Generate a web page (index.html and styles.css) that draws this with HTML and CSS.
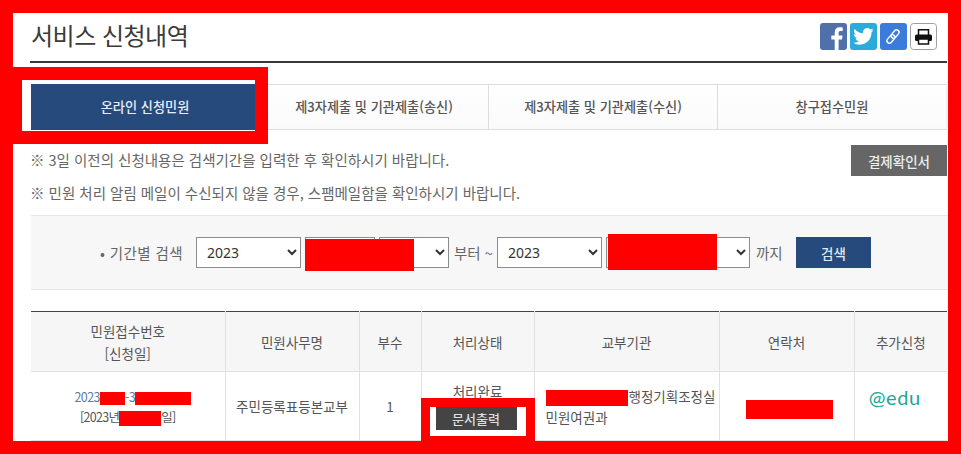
FILE: index.html
```html
<!DOCTYPE html>
<html lang="ko">
<head>
    <meta charset="UTF-8">
    <title>서비스 신청내역</title>
    <link rel="stylesheet" href="styles.css">
</head>
<body>
    <div class="frame">
        <div class="head">
            <h1>서비스 신청내역</h1>
            <div class="share">
                <svg class="icon" viewBox="0 0 27 27"><rect width="27" height="27" rx="3" fill="#4f70a8"/><path fill="#fff" d="M18.6 27V16.6h3.4l.5-4h-3.900V10c0-1.200.3-2 2-2h2.100V4.400c-.4 0-1.600-.2-3-.2-3 0-5 1.800-5 5.200v3.200h-3.400v4h3.400V27z"/></svg>
                <svg class="icon" viewBox="0 0 27 27"><rect width="27" height="27" rx="3" fill="#2aabdc"/><g transform="translate(3.2 3.2) scale(.85)"><path fill="#fff" d="M23.953 4.57a10 10 0 01-2.825.775 4.958 4.958 0 002.163-2.723c-.951.555-2.005.959-3.127 1.184a4.92 4.92 0 00-8.384 4.482C7.69 8.095 4.067 6.13 1.64 3.162a4.822 4.822 0 00-.666 2.475c0 1.71.87 3.213 2.188 4.096a4.904 4.904 0 01-2.228-.616v.06a4.923 4.923 0 003.946 4.827 4.996 4.996 0 01-2.212.085 4.936 4.936 0 004.604 3.417 9.867 9.867 0 01-6.102 2.105c-.39 0-.779-.023-1.17-.067a13.995 13.995 0 007.557 2.209c9.053 0 13.998-7.496 13.998-13.985 0-.21 0-.42-.015-.63A9.935 9.935 0 0024 4.59z"/></g></svg>
                <svg class="icon" viewBox="0 0 27 27"><rect width="27" height="27" rx="3" fill="#3a7bdc"/><g fill="none" stroke="#fff" stroke-width="1.4" transform="rotate(-50 13 13.500)"><rect x="5" y="11" width="9.500" height="5" rx="2.500"/><rect x="11.500" y="11" width="9.500" height="5" rx="2.500"/></g></svg>
                <svg class="icon" viewBox="0 0 27 27"><rect x=".5" y=".5" width="26" height="26" rx="3" fill="#fff" stroke="#a0a0a0"/><path fill="none" stroke="#111" stroke-width="1.500" d="M8.500 12V6.800h10V12"/><rect x="5" y="11.500" width="17" height="6.500" rx="1.500" fill="#111"/><path fill="#fff" stroke="#111" stroke-width="1.500" d="M8.500 16h10v5h-10z"/></svg>
            </div>
        </div>

        <div class="tabs">
            <a class="tab active">온라인 신청민원</a>
            <a class="tab">제3자제출 및 기관제출(송신)</a>
            <a class="tab">제3자제출 및 기관제출(수신)</a>
            <a class="tab">창구접수민원</a>
        </div>

        <div class="notice">
            <div>
                <p class="first">※ 3일 이전의 신청내용은 검색기간을 입력한 후 확인하시기 바랍니다.</p>
                <p>※ 민원 처리 알림 메일이 수신되지 않을 경우, 스팸메일함을 확인하시기 바랍니다.</p>
            </div>
            <button class="btn-receipt">결제확인서</button>
        </div>

        <div class="search">
            <span class="label">• 기간별 검색</span>
            <select class="year"><option>2023</option></select>
            <select class="sub"><option></option></select>
            <select class="sub"><option></option></select>
            <span class="from">부터 ~</span>
            <select class="year"><option>2023</option></select>
            <select class="sub"><option></option></select>
            <select class="sub"><option></option></select>
            <span class="to">까지</span>
            <button class="btn-search">검색</button>
        </div>

        <table class="list">
            <colgroup>
                <col class="c1"><col class="c2"><col class="c3"><col class="c4"><col class="c5"><col class="c6"><col class="c7">
            </colgroup>
            <tr>
                <th>민원접수번호<br>[신청일]</th>
                <th>민원사무명</th>
                <th>부수</th>
                <th>처리상태</th>
                <th>교부기관</th>
                <th>연락처</th>
                <th>추가신청</th>
            </tr>
            <tr>
                <td class="receipt">
                    <span class="num"><span class="blue">2023<i class="mask m1"></i>-3</span><i class="mask m2"></i></span>
                    <span class="date">[2023년<i class="mask m3"></i>일]</span>
                </td>
                <td>주민등록표등본교부</td>
                <td>1</td>
                <td class="state">처리완료<button class="btn-print">문서출력</button></td>
                <td class="org"><i class="mask m4"></i>행정기획조정실<br>민원여권과</td>
                <td class="tel"><i class="mask m5"></i></td>
                <td class="extra">@edu</td>
            </tr>
        </table>

        <!-- 가림 표시 -->
        <div class="mask over o1"></div>
        <div class="mask over o2"></div>
        <div class="mark mark-tab"></div>
        <div class="mark mark-print"></div>
    </div>
</body>
</html>
```
FILE: styles.css
```css
* { box-sizing: border-box; }
html, body { margin: 0; padding: 0; }
body {
    font-family: "Noto Sans CJK KR", "Noto Sans", sans-serif;
    color: #555;
    background: #fff;
}
.frame {
    position: relative;
    width: 961px;
    height: 454px;
    border: 13px solid #f00;
    overflow: hidden;
    background: #fff;
}

/* 제목 */
.head {
    display: flex;
    justify-content: space-between;
    align-items: flex-start;
    height: 50px;
    margin: 0 1px 0 17px;
    border-bottom: 2px solid #383838;
}
h1 {
    margin: 5px 0 0 1px;
    font-size: 24px;
    line-height: 34px;
    font-weight: 400;
    letter-spacing: -0.5px;
    color: #3a3a3a;
}
.share {
    display: flex;
    gap: 3px;
    margin: 10px 10px 0 0;
}
.icon { width: 27px; height: 27px; display: block; }

/* 탭 */
.tabs {
    display: grid;
    grid-template-columns: repeat(4, 229px);
    margin: 21px 0 0 18px;
}
.tab {
    height: 46px;
    line-height: 44px;
    text-align: center;
    font-size: 13.2px;
    font-weight: 500;
    color: #555;
    border-top: 1px solid #ddd;
    border-bottom: 1px solid #ddd;
    border-right: 1px solid #ddd;
    background: linear-gradient(#fff, #fafafa);
}
.tab:last-child { border-right-color: #eee; }
.tab.active {
    background: #264a7c;
    border-color: #264a7c;
    color: #e6eef8;
}

/* 안내 */
.notice {
    display: flex;
    justify-content: space-between;
    align-items: flex-start;
    margin: 15px 1px 0 17px;
    height: 70px;
}
.notice p {
    margin: 0;
    font-size: 14.5px;
    line-height: 20px;
    color: #666;
}
.notice p.first { margin: 5px 0 13px; }
.btn-receipt {
    width: 96px;
    height: 31px;
    padding: 0;
    border: 0;
    background: #666;
    color: #eee;
    font: 500 13.5px "Noto Sans CJK KR", sans-serif;
}

/* 검색 */
.search {
    display: flex;
    align-items: center;
    height: 75px;
    margin-left: 18px;
    padding-left: 69px;
    background: #f7f7f8;
    border-top: 1px solid #e6e6e6;
    border-bottom: 1px solid #e6e6e6;
    font-size: 14.5px;
    color: #666;
}
.label { width: 96px; letter-spacing: 0.4px; white-space: nowrap; }
.search select {
    height: 31px;
    border: 1px solid #8c8c8c;
    border-radius: 0;
    background: #fff;
    padding-left: 6px;
    color: #333;
    font: 14px "Noto Sans", sans-serif;
    margin-right: 4px;
}
.year { width: 105px; }
.sub { width: 70px; }
.from { width: 43px; margin-left: 1px; white-space: nowrap; }
.to { width: 40px; margin-left: 2px; }
.btn-search {
    width: 75px;
    height: 31px;
    padding: 0;
    border: 0;
    background: #264a7c;
    color: #dfe8f4;
    font: 500 13.5px "Noto Sans CJK KR", sans-serif;
}

/* 목록 */
.list {
    table-layout: fixed;
    border-collapse: collapse;
    width: 916px;
    margin: 21px 0 0 18px;
    border-top: 1px solid #444;
    font-size: 13.5px;
}
.c1 { width: 194px; }
.c2 { width: 134px; }
.c3 { width: 62px; }
.c4 { width: 113px; }
.c5 { width: 185px; }
.c6 { width: 135px; }
.c7 { width: 93px; }
.list th, .list td {
    border-left: 1px solid #e0e0e4;
    border-bottom: 1px solid #e0e0e4;
    padding: 0;
    text-align: center;
    vertical-align: middle;
}
.list th:first-child, .list td:first-child { border-left: 0; }
.list th {
    height: 60px;
    background: #f6f6f7;
    font-weight: 400;
    line-height: 22px;
}
.list td { height: 69px; line-height: 20px; }
.list td.receipt { padding-top: 2px; font-size: 12.5px; }
.num { display: block; padding-left: 10px; }
.blue { color: #5a7ba5; letter-spacing: -0.6px; }
.date { letter-spacing: -0.7px; }
.list td.state { vertical-align: top; padding-top: 9px; }
.btn-print {
    display: block;
    width: 81px;
    height: 24px;
    margin: 5px 0 0 14px;
    padding: 0;
    border: 0;
    background: #444;
    color: #ddd;
    font: 500 13px "Noto Sans CJK KR", sans-serif;
}
.list td.org { text-align: left; padding: 2px 0 0 11px; line-height: 21px; }
.list td.tel { padding: 2px 0 0 6px; }
.list td.extra {
    font: 20px Lato, sans-serif;
    letter-spacing: 0.6px;
    color: #1aa898;
    vertical-align: top;
    padding: 13px 12px 0 0;
}

/* 가림 */
.mask { background: #f00; }
i.mask { display: inline-block; vertical-align: middle; }
.m1 { width: 25px; height: 13px; }
.m2 { width: 56px; height: 13px; }
.m3 { width: 42px; height: 15px; }
.m4 { width: 82px; height: 16px; margin-right: 1px; }
.m5 { width: 87px; height: 19px; margin-top: 5px; }
.over { position: absolute; }
.o1 { left: 292px; top: 226px; width: 109px; height: 32px; }
.o2 { left: 595px; top: 221px; width: 109px; height: 36px; }

/* 강조 표시 */
.mark { position: absolute; border-style: solid; border-color: #f00; }
.mark-tab { left: -4px; top: 54px; width: 259px; height: 77px; border-width: 13px; }
.mark-print { left: 408px; top: 385px; width: 114px; height: 47px; border-width: 9px; }
```
